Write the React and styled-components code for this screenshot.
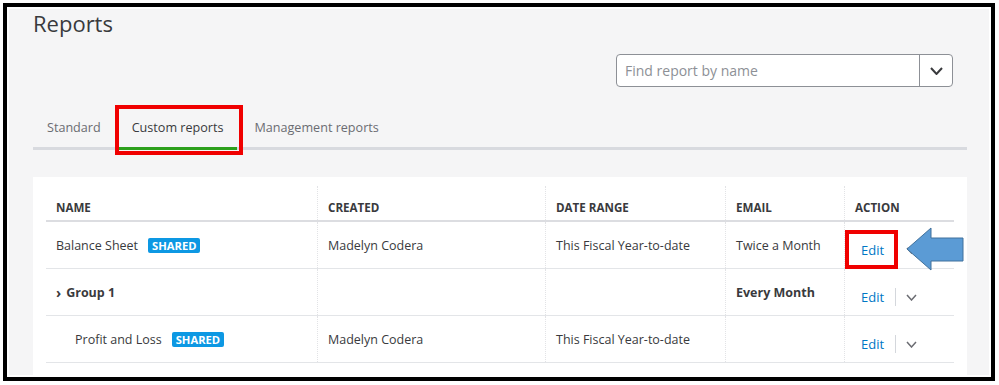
import React from 'react';
import styled, { createGlobalStyle } from 'styled-components';

const GlobalStyle = createGlobalStyle`
  body {
    margin: 0;
    background: #fff;
    font-family: "Open Sans", "Liberation Sans", sans-serif;
  }
`;

const Frame = styled.div`
  box-sizing: border-box;
  margin: 3px 0 0 3px;
  width: 992px;
  height: 378px;
  border: 4px solid #000;
  background: #fff;
  padding: 2px;
`;

const Page = styled.div`
  box-sizing: border-box;
  height: 100%;
  background: #f5f5f6;
  padding: 0 22px 0 24px;
  overflow: hidden;
`;

const Title = styled.h1`
  margin: 0;
  font-size: 22px;
  line-height: 28px;
  font-weight: 400;
  color: #393a3d;
`;

const SearchRow = styled.div`
  display: flex;
  justify-content: flex-end;
  margin-top: 17px;
  padding-right: 14px;
`;

const SearchBox = styled.div`
  box-sizing: border-box;
  display: flex;
  width: 337px;
  height: 33px;
  background: #fff;
  border: 1px solid #8d9096;
  border-radius: 4px;
`;

const SearchInput = styled.input`
  flex: 1;
  border: none;
  outline: none;
  background: transparent;
  padding: 0 8px;
  font-family: "Open Sans", "Liberation Sans", sans-serif;
  font-size: 14px;
  color: #393a3d;
  &::placeholder {
    color: #8d9096;
  }
`;

const SearchButton = styled.div`
  width: 32px;
  display: flex;
  align-items: center;
  justify-content: center;
  border-left: 1px solid #8d9096;
`;

const Tabs = styled.div`
  display: flex;
  gap: 3px;
  margin-top: 17px;
  border-bottom: 3px solid #d8dadf;
`;

const Tab = styled.div`
  position: relative;
  padding: 15px 14px 10px;
  line-height: 18px;
  font-size: 12.6px;
  color: ${(p) => (p.$active ? '#393a3d' : '#6b6c72')};
  border-bottom: 3px solid ${(p) => (p.$active ? '#2ca01c' : 'transparent')};
  margin-bottom: -3px;
`;

const RedBox = styled.div`
  position: absolute;
  box-sizing: border-box;
  border: 4px solid #f00000;
  left: ${(p) => p.$left}px;
  top: ${(p) => p.$top}px;
  width: ${(p) => p.$w}px;
  height: ${(p) => p.$h}px;
  pointer-events: none;
`;

const Card = styled.div`
  margin-top: 27px;
  background: #fff;
  padding: 9px 13px 20px;
`;

const Row = styled.div`
  display: grid;
  grid-template-columns: 271px 228px 180px 119px 110px;
  height: ${(p) => (p.$header ? '36px' : '47px')};
  box-sizing: border-box;
  border-bottom: ${(p) => (p.$header ? '2px solid #dcdde1' : '1px solid #e3e5e8')};
`;

const Cell = styled.div`
  position: relative;
  display: flex;
  align-items: center;
  padding-left: ${(p) => (p.$indent ? 29 : p.$action && !p.$header ? 16 : 10)}px;
  padding-top: ${(p) => (p.$header ? 8 : p.$action ? 10 : 0)}px;
  border-left: ${(p) => (p.$first ? 'none' : '1px dotted #e2e3e6')};
  font-size: ${(p) => (p.$header ? '11.6px' : '12.5px')};
  font-weight: ${(p) => (p.$header || p.$bold ? 700 : 400)};
  color: #393a3d;
  white-space: nowrap;
`;

const Badge = styled.span`
  margin-left: 10px;
  padding: 0 4px;
  height: 15px;
  line-height: 15px;
  border-radius: 2px;
  background: #0d98e3;
  color: #fff;
  font-size: 11.2px;
  font-weight: 700;
`;

const Caret = styled.span`
  font-size: 14px;
  margin-right: 5px;
  font-weight: 700;
`;

const EditLink = styled.a`
  color: #0077c5;
  font-size: 13px;
  text-decoration: none;
  cursor: pointer;
`;

const Divider = styled.span`
  width: 1px;
  height: 18px;
  background: #d4d7dc;
  margin-left: 11px;
`;

const MenuCaret = styled.span`
  display: flex;
  margin-left: 10px;
`;

const Arrow = styled.svg`
  position: absolute;
  left: 61px;
  top: 5px;
  overflow: visible;
`;

const Chevron = ({ w = 11, h = 7, color = '#6b6c72', sw = 1.5 }) => (
  <svg width={w} height={h} viewBox={`0 0 ${w} ${h}`}>
    <polyline
      points={`1,1 ${w / 2},${h - 1} ${w - 1},1`}
      fill="none"
      stroke={color}
      strokeWidth={sw}
    />
  </svg>
);

const rows = [
  { name: 'Balance Sheet', shared: true, created: 'Madelyn Codera', range: 'This Fiscal Year-to-date', email: 'Twice a Month', marked: true },
  { name: 'Group 1', group: true, created: '', range: '', email: 'Every Month' },
  { name: 'Profit and Loss', shared: true, indent: true, created: 'Madelyn Codera', range: 'This Fiscal Year-to-date', email: '' },
];

const Action = ({ marked }) => (
  <Cell $action>
    <EditLink>Edit</EditLink>
    <Divider />
    <MenuCaret>
      <Chevron />
    </MenuCaret>
    {marked && (
      <>
        <RedBox $left={0} $top={8} $w={53} $h={39} />
        <Arrow width="58" height="44" viewBox="0 0 58 44">
          <polygon
            points="1,22 25,1 25,11 57,11 57,34 25,34 25,43"
            fill="#5b9bd5"
            stroke="#41719c"
            strokeWidth="1"
          />
        </Arrow>
      </>
    )}
  </Cell>
);

export default function App() {
  return (
    <>
      <GlobalStyle />
      <Frame>
        <Page>
          <Title>Reports</Title>
          <SearchRow>
            <SearchBox>
              <SearchInput placeholder="Find report by name" />
              <SearchButton>
                <Chevron w={13} h={8} color="#393a3d" sw={2} />
              </SearchButton>
            </SearchBox>
          </SearchRow>
          <Tabs>
            <Tab>Standard</Tab>
            <Tab $active>
              Custom reports
              <RedBox $left={-3} $top={1} $w={128} $h={50} />
            </Tab>
            <Tab>Management reports</Tab>
          </Tabs>
          <Card>
            <Row $header>
              <Cell $header $first>NAME</Cell>
              <Cell $header>CREATED</Cell>
              <Cell $header>DATE RANGE</Cell>
              <Cell $header>EMAIL</Cell>
              <Cell $header $action>ACTION</Cell>
            </Row>
            {rows.map((r) => (
              <Row key={r.name}>
                <Cell $first $indent={r.indent} $bold={r.group}>
                  {r.group && <Caret>›</Caret>}
                  {r.name}
                  {r.shared && <Badge>SHARED</Badge>}
                </Cell>
                <Cell>{r.created}</Cell>
                <Cell>{r.range}</Cell>
                <Cell $bold={r.group}>{r.email}</Cell>
                <Action marked={r.marked} />
              </Row>
            ))}
          </Card>
        </Page>
      </Frame>
    </>
  );
}
